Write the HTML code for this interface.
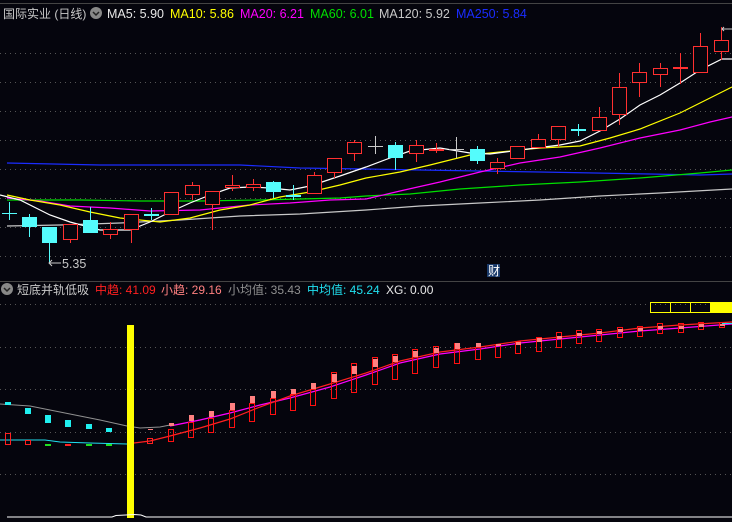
<!DOCTYPE html>
<html><head><meta charset="utf-8"><style>
html,body{margin:0;padding:0;background:#05050d;width:732px;height:522px;overflow:hidden;font-family:"Liberation Sans","Noto Sans CJK SC",sans-serif}
svg{position:absolute;left:0;top:0}
.t{font-size:12.5px;font-family:"Liberation Sans","Noto Sans CJK SC",sans-serif}
.k{font-size:12px}
</style></head><body>
<svg id="s" width="732" height="522" xmlns="http://www.w3.org/2000/svg">
<rect width="732" height="522" fill="#05050d"/>
<line x1="0" y1="3.5" x2="732" y2="3.5" stroke="#444" />
<line x1="0" y1="281.5" x2="732" y2="281.5" stroke="#444" />
<g id="grid" stroke="#555" stroke-dasharray="1,4"></g>
<g id="ma" fill="none" stroke-width="1.2"></g>
<g id="c"></g>
<g id="low"></g>
<rect x="127" y="325" width="7" height="193" fill="#ffff00"/>
<polyline points="7,517 112,517 116,515.5 134,514.5 141,515 146,517 732,517" fill="none" stroke="#fff" stroke-width="1"/>
<rect x="650.5" y="302.5" width="20" height="10" fill="none" stroke="#ff0"/>
<rect x="670.5" y="302.5" width="20" height="10" fill="none" stroke="#ff0"/>
<rect x="690.5" y="302.5" width="20" height="10" fill="none" stroke="#ff0"/>
<rect x="711" y="302" width="21" height="11" fill="#ff0"/>
<text class="t k" x="3" y="18" fill="#c8c8c8">国际实业 (日线)</text>
<circle cx="96" cy="13" r="6" fill="#888"/><path d="M93 12l3 3 3-3" stroke="#222" fill="none" stroke-width="1.5"/>
<text class="t" x="107" y="18" fill="#e8e8e8">MA5: 5.90</text>
<text class="t" x="170" y="18" fill="#ffff00">MA10: 5.86</text>
<text class="t" x="240" y="18" fill="#ff00ff">MA20: 6.21</text>
<text class="t" x="310" y="18" fill="#00e000">MA60: 6.01</text>
<text class="t" x="379" y="18" fill="#c8c8c8">MA120: 5.92</text>
<text class="t" x="456" y="18" fill="#1a2cff">MA250: 5.84</text>
<text class="t" x="62" y="268" fill="#c8c8c8">5.35</text>
<path d="M49 263h12M52 260l-3 3 3 3" stroke="#ccc" fill="none"/>
<path d="M722 29h10M724 27l-2 2 2 2" stroke="#ccc" fill="none"/>
<rect x="487" y="264" width="13" height="13" fill="#1a3a6a"/>
<text x="488" y="275" font-size="12" fill="#fff" font-family="Noto Sans CJK SC,sans-serif">财</text>
<circle cx="7" cy="289" r="6" fill="#888"/><path d="M4 288l3 3 3-3" stroke="#222" fill="none" stroke-width="1.5"/>
<text class="t k" x="17" y="294" fill="#c8c8c8">短底并轨低吸</text>
<text class="t k" x="95" y="294" fill="#ff2020">中趋: 41.09</text>
<text class="t k" x="161" y="294" fill="#ff8080">小趋: 29.16</text>
<text class="t k" x="228" y="294" fill="#909090">小均值: 35.43</text>
<text class="t k" x="307" y="294" fill="#20e0f0">中均值: 45.24</text>
<text class="t k" x="386" y="294" fill="#e8e8e8">XG: 0.00</text>
</svg>
<script>
const NS="http://www.w3.org/2000/svg";
function el(p,t,a){const e=document.createElementNS(NS,t);for(const k in a)e.setAttribute(k,a[k]);document.getElementById(p).appendChild(e);return e;}
[53,82,111,140,169,198,227,256,304,347,389,432,474].forEach(y=>el("grid","line",{x1:0,x2:732,y1:y+.5,y2:y+.5}));
const ma=[
["#1a2cff","7,163 100,165 240,165 300,168 366,169 420,170 540,172 650,174 700,175 732,174"],
["#c8c8c8","7,226 60,225 120,223 180,220 240,216 300,214 366,210 420,206 480,203 540,200 600,196 660,193 732,189"],
["#00e000","7,200 80,200 140,201 200,201 260,200 300,199 340,198 366,196 410,194 460,189 520,185 580,182 640,178 700,173 732,170"],
["#ff00ff","7,198 40,201 70,206 110,208 150,211 200,210 250,205 290,203 330,200 366,199 400,191 440,182 480,172 520,163 560,157 600,148 640,138 680,130 710,122 732,117"],
["#ffff00","7,195 30,200 60,205 90,212 120,218 160,222 190,218 220,210 250,205 280,197 310,192 340,185 366,178 400,172 430,165 470,155 500,152 540,148 580,146 610,138 640,129 680,113 710,98 732,87"],
["#ffffff","0,195 20,200 50,215 70,222 100,230 130,230 150,222 170,212 190,203 210,195 230,188 250,187 270,188 290,190 310,186 340,176 366,167 390,158 410,151 440,148 470,153 490,154 520,150 560,145 580,141 600,131 620,119 640,105 660,95 680,83 700,70 722,59 732,59"]];
ma.forEach(m=>el("ma","polyline",{points:m[1],stroke:m[0]}));
const C=[[213,213,202,220,"cx"],[217,227,214,237,"c"],[227,243,227,263,"c"],[224,239,224,243,"r"],[220,233,207,233,"c"],[229,234,222,239,"r"],[214,229,214,243,"r"],[214,216,208,220,"c"],[192,214,192,214,"r"],[185,194,182,200,"r"],[191,204,191,230,"r"],[185,187,175,191,"r"],[184,187,179,191,"r"],[182,192,181,198,"c"],[195,197,185,200,"c"],[175,193,172,193,"r"],[158,172,158,178,"r"],[142,153,140,161,"r"],
[146,146,136,154,"x"],[145,158,142,170,"c"],[145,153,140,162,"r"],[149,151,143,153,"f"],[149,149,137,158,"x"],[149,161,146,164,"c"],[162,168,158,174,"r"],[146,158,146,158,"r"],[139,147,134,147,"r"],[126,139,126,147,"r"],[129,131,124,136,"c"],[117,130,107,130,"r"],[87,114,73,125,"r"],[72,82,63,97,"r"],[68,74,63,87,"r"],[67,69,53,84,"f"],[46,72,33,72,"r"],[40,51,27,60,"r"]];
C.forEach((d,i)=>{const x=Math.round(8.5+20.35*i);const [t,b,h,l,k]=d;
 const col=(k=="c"||k=="cx")?"#54fcfc":(k=="x"?"#c8c8c8":"#ff3030");
 el("c","line",{x1:x+.5,x2:x+.5,y1:h,y2:l,stroke:col});
 if(k=="x"||k=="cx"){el("c","line",{x1:x-7,x2:x+8,y1:t+.5,y2:t+.5,stroke:col});return;}
 if(k=="r") el("c","rect",{x:x-6.5,y:t+.5,width:14,height:Math.max(1,b-t),fill:"#05050d",stroke:col});
 else el("c","rect",{x:x-7,y:t,width:15,height:Math.max(2,b-t),fill:col});
});
el("low","polyline",{points:"0,404 30,406 60,412 100,420 127,426 140,428 160,427 170,425",fill:"none",stroke:"#909090"});
el("low","polyline",{points:"0,440 45,440 60,442 90,443 127,444 134,443",fill:"none",stroke:"#20e0f0"});
el("low","polyline",{points:"170,426 200,420 230,413 260,405 290,398 330,387 366,375 400,363 440,354 480,349 520,343 560,339 600,335 640,331 680,328 732,324",fill:"none",stroke:"#ff00ff","stroke-width":1.2});
el("low","polyline",{points:"134,443 150,441 170,436 200,428 230,419 260,407 290,396 330,384 366,373 400,361 440,352 480,347 520,341 560,337 600,333 640,328 680,325 732,322",fill:"none",stroke:"#ff2020","stroke-width":1.2});
[[8,402,405],[28,408,414],[48,415,423],[68,420,427],[89,424,429],[109,428,432]].forEach(b=>el("low","rect",{x:b[0]-3,y:b[1],width:6,height:b[2]-b[1],fill:"#20f0f0"}));
el("low","rect",{x:5.5,y:433.5,width:5,height:11,fill:"none",stroke:"#ff2020"});
el("low","rect",{x:25.5,y:440.5,width:5,height:4,fill:"none",stroke:"#ff2020"});
[[48,"#20e020"],[68,"#ff2020"],[89,"#20e020"],[109,"#20e020"]].forEach(b=>el("low","rect",{x:b[0]-3,y:444,width:6,height:2,fill:b[1]}));
el("low","rect",{x:147.5,y:438.5,width:5,height:5,fill:"none",stroke:"#ff2020"});
el("low","rect",{x:148,y:429,width:5,height:1,fill:"#ff8080"});
const B=[[171,423,426,429,441],[191,415,421,422,437],[211,411,417,418,432],[232,403,410,410,427],[252,396,403,403,421],[273,391,398,398,414],[293,389,394,394,410],[313,383,389,389,405],[334,374,382,372,398],[354,366,374,363,392],
[375,359,367,357,384],[395,356,362,354,379],[415,351,357,349,373],[436,348,353,346,367],[457,343,349,343,363],[478,343,347,347,359],[498,344,346,344,357],[518,342,345,341,353],[539,338,342,337,351],[559,336,339,332,347],[579,333,336,330,343],[599,331,334,329,341],[620,329,332,327,337],[640,328,331,326,336],[660,326,329,323,333],[681,326,329,323,332],[701,324,327,322,329],[722,324,326,322,327]];
B.forEach(b=>{const x=b[0];
 el("low","rect",{x:x-2.5,y:b[3]+.5,width:5,height:b[4]-b[3],fill:"none",stroke:"#ff1010"});
 el("low","rect",{x:x-2,y:b[1],width:5,height:b[2]-b[1],fill:"#ff8080"});
});
el("low","line",{x1:722,x2:732,y1:323.5,y2:323.5,stroke:"#20e0f0"});
</script>
</body></html>
